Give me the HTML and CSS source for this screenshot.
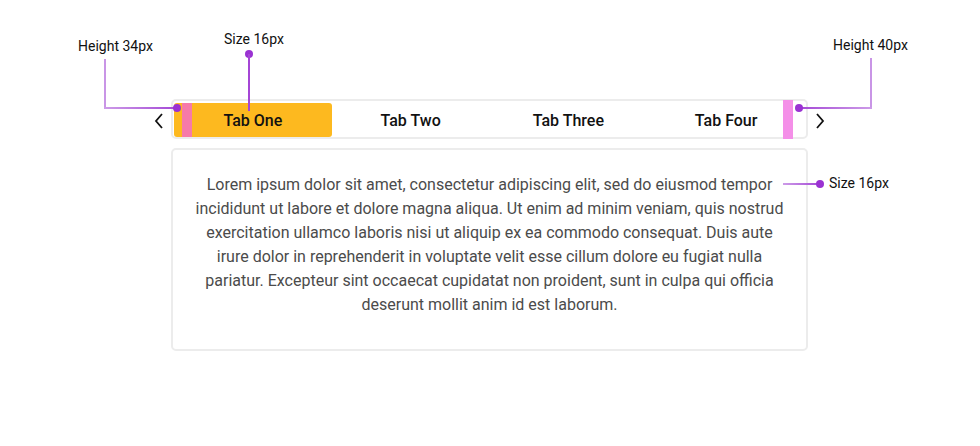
FILE: index.html
```html
<!DOCTYPE html>
<html>
<head>
<meta charset="utf-8">
<link rel="stylesheet" href="styles.css">
</head>
<body>
<div class="stage">
  <div class="tabrow">
    <button class="chev" aria-label="Previous">
      <svg width="12" height="18" viewBox="0 0 12 18"><path d="M9 2 L3 9 L9 16" fill="none" stroke="#111" stroke-width="1.8"/></svg>
    </button>
    <div class="tabbar">
      <div class="tabs">
        <div class="tab active"><span class="marker"></span>Tab One</div>
        <div class="tab">Tab Two</div>
        <div class="tab">Tab Three</div>
        <div class="tab">Tab Four</div>
      </div>
      <span class="edge"></span>
    </div>
    <button class="chev" aria-label="Next">
      <svg width="12" height="18" viewBox="0 0 12 18"><path d="M3 2 L9 9 L3 16" fill="none" stroke="#111" stroke-width="1.8"/></svg>
    </button>
  </div>
  <div class="card">
    <p>Lorem ipsum dolor sit amet, consectetur adipiscing elit, sed do eiusmod tempor incididunt ut labore et dolore magna aliqua. Ut enim ad minim veniam, quis nostrud exercitation ullamco laboris nisi ut aliquip ex ea commodo consequat. Duis aute irure dolor in reprehenderit in voluptate velit esse cillum dolore eu fugiat nulla pariatur. Excepteur sint occaecat cupidatat non proident, sunt in culpa qui officia deserunt mollit anim id est laborum.</p>
  </div>

  <div class="note note-h34">Height 34px</div>
  <div class="vline vl-h34"></div>
  <div class="hline hl-h34"></div>
  <div class="dot dot-h34"></div>

  <div class="note note-s16a">Size 16px</div>
  <div class="dot dot-s16a"></div>
  <div class="vline vl-s16a"></div>

  <div class="note note-h40">Height 40px</div>
  <div class="vline vl-h40"></div>
  <div class="hline hl-h40"></div>
  <div class="dot dot-h40"></div>

  <div class="note note-s16b">Size 16px</div>
  <div class="hline hl-s16b"></div>
  <div class="dot dot-s16b"></div>
</div>
</body>
</html>
```
FILE: styles.css
```css
* { box-sizing: border-box; }
html, body { margin: 0; padding: 0; background: #fff; }
body { font-family: Roboto, "Liberation Sans", sans-serif; }

.stage {
  position: relative;
  width: 980px;
  height: 446px;
  padding: 99px 1px 0 0;
  display: flex;
  flex-direction: column;
  align-items: center;
}

.tabrow {
  display: flex;
  align-items: center;
}

.chev {
  width: 24px;
  height: 40px;
  padding: 0;
  margin: 0;
  border: 0;
  background: none;
  display: flex;
  align-items: center;
  justify-content: center;
  padding-top: 3px;
}

.tabbar {
  position: relative;
  width: 637px;
  height: 40px;
  border: 2px solid #ececec;
  border-radius: 5px;
  padding: 2px 1px 0;
}

.tabs {
  display: flex;
  height: 34px;
}

.tab {
  position: relative;
  flex: 1;
  display: flex;
  align-items: center;
  justify-content: center;
  font-size: 16px;
  font-weight: 500;
  color: #111;
  border-radius: 3px;
}

.tab.active { background: #fdb91f; }

.marker {
  position: absolute;
  left: 8px;
  top: 0;
  width: 10px;
  height: 100%;
  background: #f67aa9;
}

.edge {
  position: absolute;
  right: 13px;
  top: -1px;
  width: 10px;
  height: 39px;
  background: #f48fe8;
}

.card {
  margin-top: 9px;
  width: 637px;
  height: 203px;
  border: 2px solid #ececec;
  border-radius: 5px;
  padding: 23px 22px 0;
}

.card p {
  margin: 0;
  font-size: 16px;
  line-height: 24px;
  color: #4b4b4b;
  text-align: center;
}

/* annotations */
.note {
  position: absolute;
  font-size: 14px;
  line-height: 16px;
  color: #111;
  white-space: nowrap;
}
.vline, .hline, .dot { position: absolute; }
.vline { width: 2px; }
.hline { height: 2px; }
.dot {
  width: 8px;
  height: 8px;
  border-radius: 50%;
  background: #9a32d2;
}

.note-h34 { left: 78px; top: 38px; }
.vl-h34 { left: 104px; top: 59px; height: 50px; background: #c995e6; }
.hl-h34 { left: 104px; top: 107px; width: 73px; background: linear-gradient(to right, #cd9ce8, #a448d6); }
.dot-h34 { left: 173px; top: 104px; }

.note-s16a { left: 224px; top: 31px; }
.dot-s16a { left: 245px; top: 50px; }
.vl-s16a { left: 248px; top: 54px; height: 57px; background: #a546d6; }

.note-h40 { left: 833px; top: 37px; }
.vl-h40 { left: 870px; top: 58px; height: 51px; background: #c995e6; }
.hl-h40 { left: 799px; top: 107px; width: 73px; background: linear-gradient(to left, #cd9ce8, #a448d6); }
.dot-h40 { left: 795px; top: 104px; }

.note-s16b { left: 829px; top: 175px; }
.hl-s16b { left: 783px; top: 183px; width: 37px; background: linear-gradient(to right, #cd9ce8, #a448d6); }
.dot-s16b { left: 816px; top: 180px; }
```
